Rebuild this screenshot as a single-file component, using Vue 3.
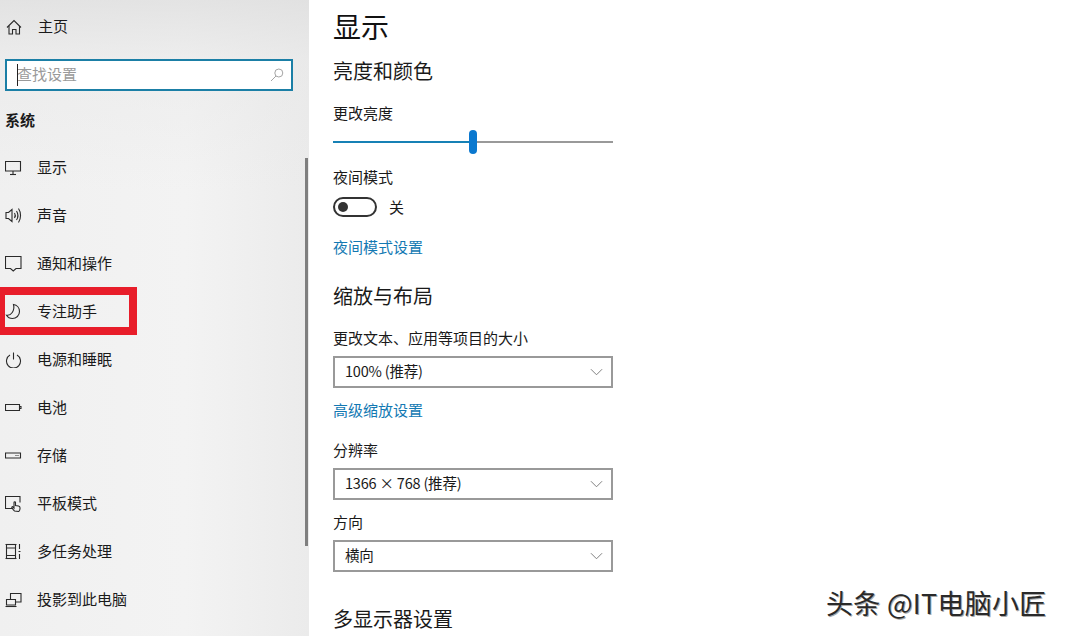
<script setup>
const navItems = [
  { label: '显示', paths: ['M.5 2.500h15v9.500h-15z', 'M8 12v3', 'M5 15.500h6'] },
  { label: '声音', paths: ['M1 5.500h2.500L7 2.500v12l-3.500-3H1z', 'M9.500 6c1 1.500 1 3.500 0 5', 'M11.500 4c1.800 2.800 1.800 6.200 0 9', 'M13.500 1.500c2.700 4 2.700 10 0 14'] },
  { label: '通知和操作', paths: ['M.5 1.500h15.500v12h-5l-2.750 2.500-2.750-2.500h-5z'] },
  { label: '专注助手', paths: ['M8.500 1.500c3.500.5 6 3.500 6 7 0 4-3.200 7-7 7-2.500 0-4.800-1.300-6-3.300 4.500.8 8.500-4.500 7-10.700z'], focus: true },
  { label: '电源和睡眠', paths: ['M8.500 1.500v7', 'M5 4a7 7 0 1 0 7 0'] },
  { label: '电池', paths: ['M.5 5.500h14v6h-14z', 'M14.500 7.500h1.500v2h-1.500'] },
  { label: '存储', paths: ['M.5 6h15v5h-15z', 'M10.500 8.500h1', 'M12.500 8.500h1'] },
  { label: '平板模式', paths: ['M8 13.500h-7.500v-12h14.500v6', 'M9.500 16c-1-1.200-2.400-2.500-2.700-3.500-.2-.8.800-1.200 1.300-.4l.9 1v-5.600c0-1 1.500-1 1.500 0v3l3 .5c1 .2 1.500 1 1.500 1.800v1c0 1-.4 1.800-1.200 2.700z'] },
  { label: '多任务处理', paths: ['M.5 1.500h11', 'M.5 15.500h11', 'M1.500 5h9v7.500h-9z', 'M1.500 1.500v3.500', 'M10.500 1.500v3.500', 'M1.500 12.500v3', 'M10.500 12.500v3', 'M14.500 1v5', 'M14.500 11v5', 'M13.500 8.500h2'] },
  { label: '投影到此电脑', paths: ['M5.500 8v-5.500h10.500v8.500h-5', 'M1.500 8.500h9v5.500h-9z', 'M.5 15.500h11'] },
]
const brightness = 50
const selects = [
  { label: '更改文本、应用等项目的大小', value: '100% (推荐)', cls: 'gap-a', link: '高级缩放设置' },
  { label: '分辨率', value: '1366 × 768 (推荐)', cls: 'gap-b' },
  { label: '方向', value: '横向', cls: 'gap-c' },
]
</script>

<template>
  <div class="page">
    <aside class="sidebar">
      <div class="home">
        <svg class="icon" viewBox="0 0 17 17" fill="none" stroke="#2a2a2a" stroke-width="1.100">
          <path d="M1 8.500 8 1.500l7 7" />
          <path d="M3 7v8h3.500v-4.500h3.500v4.500h3.500v-8" />
        </svg>
        <span class="text">主页</span>
      </div>
      <div class="search">
        <span class="caret"></span>
        <span class="placeholder">查找设置</span>
        <svg class="search-icon" viewBox="0 0 14 14" fill="none" stroke="#a5a5a5" stroke-width="1">
          <circle cx="8.800" cy="5" r="4" />
          <path d="M6 8 1 13" />
        </svg>
      </div>
      <div class="group">系统</div>
      <nav class="nav">
        <div v-for="item in navItems" :key="item.label" class="nav-item">
          <svg class="icon" viewBox="0 0 17 17" fill="none" stroke="#2a2a2a" stroke-width="1.100">
            <path v-for="d in item.paths" :key="d" :d="d" />
          </svg>
          <span class="text">{{ item.label }}</span>
          <span v-if="item.focus" class="highlight"></span>
        </div>
      </nav>
      <div class="scrollbar"></div>
    </aside>

    <main class="content">
      <h1 class="title">显示</h1>
      <h2 class="section first">亮度和颜色</h2>
      <div class="label brightness">更改亮度</div>
      <div class="slider">
        <div class="fill" :style="{ width: brightness + '%' }"></div>
        <div class="thumb"></div>
        <div class="rest"></div>
      </div>
      <div class="label night">夜间模式</div>
      <div class="toggle-row">
        <span class="toggle"><span class="dot"></span></span>
        <span class="toggle-text">关</span>
      </div>
      <a class="link night-link">夜间模式设置</a>
      <h2 class="section scale">缩放与布局</h2>
      <template v-for="s in selects" :key="s.label">
        <div class="label" :class="s.cls">{{ s.label }}</div>
        <div class="select">
          <span class="select-value">{{ s.value }}</span>
          <svg class="chevron" viewBox="0 0 14 8" fill="none" stroke="#777" stroke-width="1">
            <path d="M1 1l6 6 6-6" />
          </svg>
        </div>
        <a v-if="s.link" class="link adv-link">{{ s.link }}</a>
      </template>
      <h2 class="section multi">多显示器设置</h2>
    </main>

    <div class="watermark">头条 @IT电脑小匠</div>
  </div>
</template>

<style>
html, body { margin: 0; background: #fff; overflow: hidden; }
</style>

<style scoped>
.page {
  position: relative;
  display: flex;
  width: 1066px;
  height: 636px;
  overflow: hidden;
  background: #fff;
  font-family: "Noto Sans CJK SC", "Noto Sans", sans-serif;
  color: #1a1a1a;
  font-size: 15px;
}
.sidebar {
  position: relative;
  flex: 0 0 309px;
  height: 636px;
  box-sizing: border-box;
  padding-top: 3px;
  background:
    linear-gradient(180deg, rgba(222,222,222,.75) 0, rgba(232,232,232,.5) 60px, rgba(240,240,240,0) 190px),
    linear-gradient(90deg, #f0f0f0 0, #f3f3f3 60%, #ebebeb 100%);
}
.home, .nav-item {
  position: relative;
  display: flex;
  align-items: center;
  height: 48px;
  padding-left: 5px;
}
.text { line-height: 20px; height: 20px; position: relative; top: -1px; }
.nav-item .text { top: 0; }
.home { padding-left: 6px; }
.icon { width: 17px; height: 17px; margin-right: 15px; flex: none; }
.search {
  position: relative;
  display: flex;
  align-items: center;
  box-sizing: border-box;
  width: 288px;
  height: 32px;
  margin: 8px 0 0 5px;
  padding: 0 0 4px 10px;
  background: #fff;
  border: 2px solid #1b7fa6;
}
.caret { position: absolute; left: 10px; top: 3px; width: 1px; height: 22px; background: #222; }
.placeholder { color: #9a9a9a; }
.search-icon { position: absolute; right: 7px; top: 7px; width: 14px; height: 14px; }
.group {
  height: 20px;
  margin: 19px 0 0 5px;
  line-height: 20px;
  font-weight: 700;
}
.nav { margin-top: 13px; }
.highlight {
  position: absolute;
  left: 0;
  top: 0;
  box-sizing: border-box;
  width: 137px;
  height: 48px;
  border: 8px solid #e81d2a;
  border-left-width: 5px;
}
.scrollbar {
  position: absolute;
  left: 305px;
  top: 158px;
  width: 3px;
  height: 388px;
  background: #7f7f7f;
}
.content {
  flex: 1;
  padding-left: 24px;
}
.title {
  margin: 7px 0 0;
  height: 40px;
  font-size: 28px;
  line-height: 38px;
  font-weight: 400;
  color: #111;
}
.section {
  margin: 0;
  height: 28px;
  font-size: 20px;
  line-height: 27px;
  font-weight: 400;
  color: #1a1a1a;
}
.first { margin-top: 10px; }
.label { height: 20px; line-height: 18px; }
.brightness { margin-top: 19px; }
.slider {
  display: flex;
  align-items: center;
  width: 280px;
  height: 24px;
  margin-top: 6px;
}
.fill { height: 2px; margin-right: -4px; background: #1681b5; }
.thumb { flex: none; width: 8px; height: 24px; border-radius: 4px; background: #0a78cf; position: relative; }
.rest { flex: 1; height: 2px; background: #999; }
.night { margin-top: 14px; }
.toggle-row { display: flex; align-items: center; height: 20px; margin-top: 9px; }
.toggle {
  display: flex;
  align-items: center;
  box-sizing: border-box;
  width: 44px;
  height: 20px;
  padding-left: 3px;
  border: 2px solid #333;
  border-radius: 10px;
}
.dot { width: 10px; height: 10px; border-radius: 50%; background: #333; }
.toggle-text { margin-left: 12px; line-height: 20px; height: 20px; }
.link { display: block; height: 20px; line-height: 18px; color: #1379b3; }
.night-link { margin-top: 21px; }
.scale { margin-top: 24px; }
.gap-a { margin-top: 19px; }
.gap-b { margin-top: 20px; }
.gap-c { margin-top: 13px; }
.select {
  display: flex;
  align-items: center;
  justify-content: space-between;
  box-sizing: border-box;
  width: 280px;
  height: 32px;
  margin-top: 7px;
  padding: 0 8px 0 10px;
  border: 2px solid #999;
  background: #fff;
}
.select-value { font-size: 14.500px; letter-spacing: -.2px; line-height: 18px; height: 20px; }
.chevron { width: 13px; height: 8px; }
.adv-link { margin-top: 13px; }
.multi { margin-top: 33px; }
.watermark {
  position: absolute;
  left: 826px;
  top: 584px;
  font-size: 27px;
  line-height: 38px;
  letter-spacing: .3px;
  color: #2a2a2a;
  white-space: nowrap;
  text-shadow: 1px 1px 0 #aaa;
}
</style>
